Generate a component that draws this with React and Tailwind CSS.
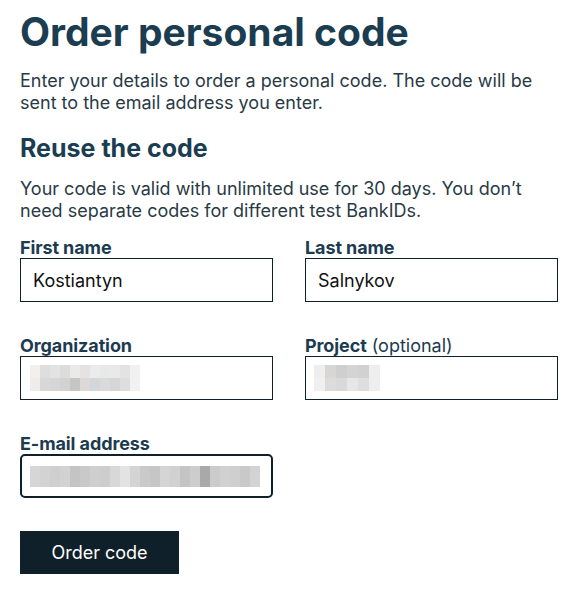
const orgCells = [
  ["#f2efed", "#dedede", "#e3e3e3", "#dcdcdc", "#e9eaea", "#e5e3e1", "#ebebed", "#e8e8e8", "#e9e9e9", "#e3e3e3", "#f1f1f1"],
  ["#efeceb", "#d8d8d8", "#d6d6d6", "#d2d2d2", "#c6c6c4", "#dcd9d7", "#d3d7dc", "#dadada", "#d6d6d6", "#dedede", "#f1f1f1"],
];

const projCells = [
  ["#eeeeee", "#d8d6d5", "#cfcfcf", "#d4d4d4", "#d1d1d1", "#eeeeee"],
  ["#f0f0f0", "#dcdcdc", "#d9d9d9", "#e6e6e6", "#dedede", "#eeeeee"],
];

const emailCells = [
  "#d6d6d6", "#d3d3d3", "#cfcfcf", "#d2d2d2", "#c4c4c4", "#c9c9c9", "#cfcfcf", "#cdcdcd",
  "#d8d8d8", "#e3e3e3", "#d4d4d4", "#cacaca", "#c6c6c6", "#d5d5d5", "#d1d1d1", "#c4c4c4",
  "#cdcdcd", "#a9a9a9", "#cbcbcb", "#d1d1d1", "#cfcfcf", "#c9c9c9", "#d3d3d3",
];

const Mosaic = ({ rows, cell, rowHeight }) => (
  <div className="flex flex-col">
    {rows.map((row, i) => (
      <div key={i} className="flex">
        {row.map((c, j) => (
          <div key={j} style={{ background: c, width: cell, height: rowHeight }} />
        ))}
      </div>
    ))}
  </div>
);

const Field = ({ label, extra, children, focused }) => (
  <div className="flex flex-col">
    <label className="text-[18px] leading-[20px] font-bold text-[#1c3b50] tracking-[-0.1px]">
      {label}
      {extra && <span className="font-normal tracking-normal"> {extra}</span>}
    </label>
    <div
      className={
        focused
          ? "h-[44px] border-2 border-[#0f202a] rounded-[5px] flex items-center pl-[8px]"
          : "h-[44px] border border-[#0f202a] flex items-center pl-[12px]"
      }
    >
      {children}
    </div>
  </div>
);

export default function App() {
  return (
    <div
      className="bg-white min-h-[594px] pl-[20px] pr-[22px] pt-[6px]"
      style={{ fontFamily: "Inter, 'Noto Sans', sans-serif" }}
    >
      <h1 className="text-[39px] leading-[52px] font-bold text-[#1b3d52]">
        Order personal code
      </h1>
      <p className="mt-[12px] text-[18px] leading-[22px] text-[#2a3a45]">
        Enter your details to order a personal code. The code will be sent to the email address you enter.
      </p>
      <h2 className="mt-[19px] text-[25px] leading-[30px] font-bold text-[#1b3d52]">
        Reuse the code
      </h2>
      <p className="mt-[15px] text-[18px] leading-[22px] text-[#2a3a45]">
        Your code is valid with unlimited use for 30 days. You don’t need separate codes for different test BankIDs.
      </p>

      <div className="mt-[16px] grid grid-cols-2 gap-x-[32px] gap-y-[34px]">
        <Field label="First name">
          <span className="text-[18px] text-[#111]">Kostiantyn</span>
        </Field>
        <Field label="Last name">
          <span className="text-[18px] text-[#111]">Salnykov</span>
        </Field>
        <Field label="Organization">
          <div className="-ml-[3px]">
            <Mosaic rows={orgCells} cell={10} rowHeight={13} />
          </div>
        </Field>
        <Field label="Project" extra="(optional)">
          <div className="-ml-[4px]">
            <Mosaic rows={projCells} cell={11} rowHeight={13} />
          </div>
        </Field>
        <Field label="E-mail address" focused>
          <Mosaic rows={[emailCells]} cell={10} rowHeight={21} />
        </Field>
      </div>

      <button className="mt-[33px] w-[159px] h-[43px] bg-[#0f202a] text-white text-[18px]">
        Order code
      </button>
    </div>
  );
}
